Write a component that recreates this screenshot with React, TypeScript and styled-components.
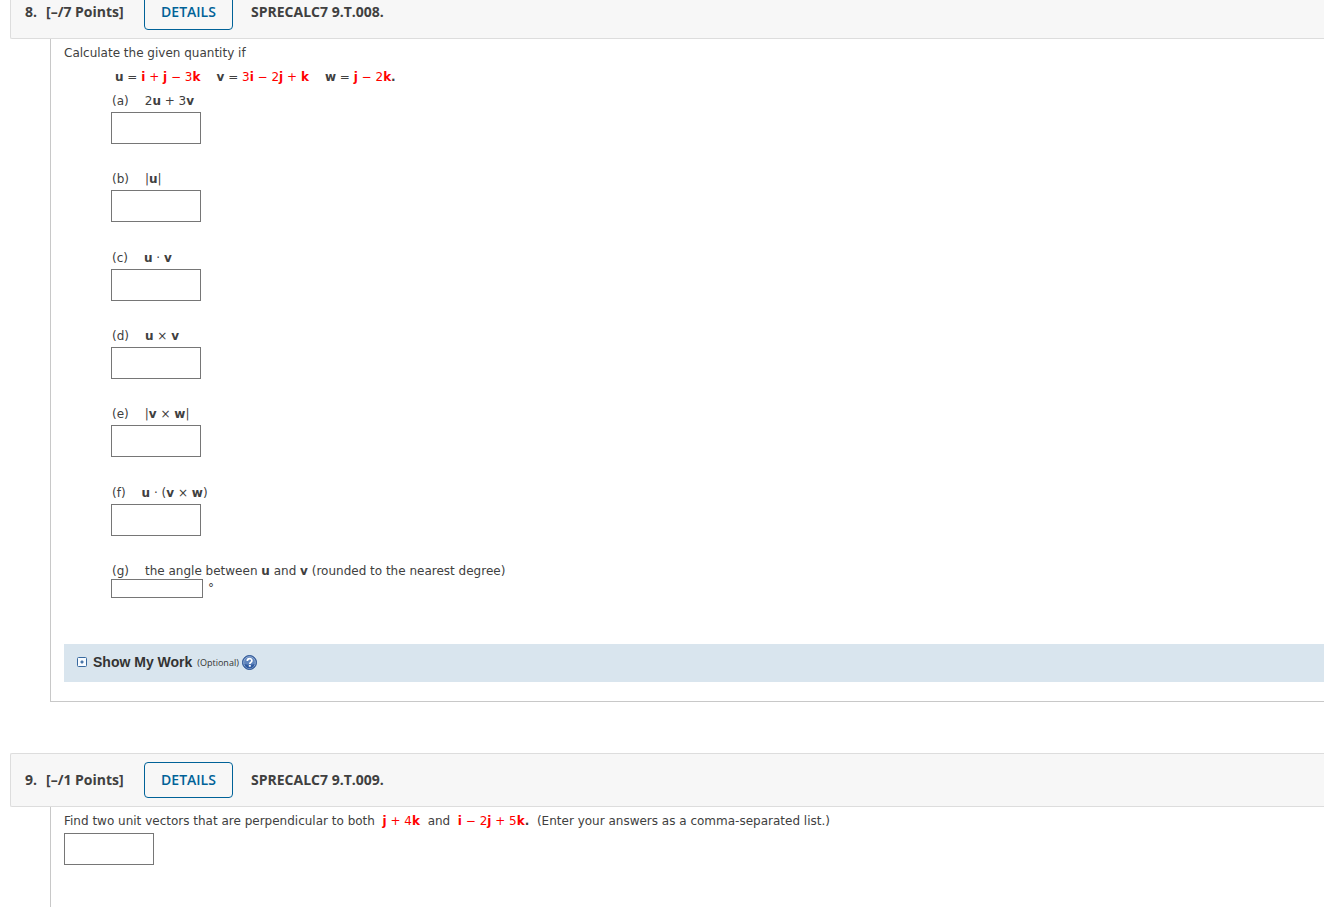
import React, { ReactNode } from "react";
import styled, { createGlobalStyle } from "styled-components";

const GlobalStyle = createGlobalStyle`
  *, *::before, *::after { box-sizing: border-box; }
  body {
    margin: 0;
    background: #fff;
    color: #404040;
    font: 12px/24px "DejaVu Sans", Verdana, sans-serif;
  }
`;

const Page = styled.main`
  margin-top: -15px;
  padding-left: 10px;
  overflow: hidden;
`;

const Question = styled.section`
  margin-bottom: 51px;

  &:last-child {
    margin-bottom: 0;
  }
`;

const QuestionHeader = styled.header`
  display: flex;
  align-items: center;
  height: 54px;
  padding-left: 14px;
  background: #f7f7f7;
  border: 1px solid #ddd;
  border-right: 0;
  border-radius: 2px 0 0 2px;
  font-family: "Open Sans", sans-serif;
  font-size: 14px;
  font-weight: 700;
  white-space: nowrap;
`;

const QuestionNumber = styled.span`
  width: 21px;
`;

const Points = styled.span`
  width: 98px;
`;

const DetailsButton = styled.button`
  width: 89px;
  height: 36px;
  margin-right: 18px;
  padding: 0;
  background: #fff0;
  border: 1px solid #006298;
  border-radius: 4px;
  color: #006298;
  font: 600 14px/20px "Open Sans", sans-serif;
`;

const QuestionCode = styled.h2`
  margin: 0;
  font-size: 14px;
`;

const QuestionBody = styled.div<{ $open?: boolean }>`
  margin-left: 40px;
  padding: 2px 0 19px 13px;
  border-left: 1px solid #c8c8c8;
  border-bottom: ${(p) => (p.$open ? "0" : "1px solid #c8c8c8")};
  min-height: ${(p) => (p.$open ? "100px" : "0")};
`;

const Prompt = styled.p`
  margin: 0;
`;

const Vectors = styled.p`
  display: flex;
  gap: 16px;
  margin: 0 0 0 51px;
`;

const Parts = styled.div`
  display: grid;
  grid-template-rows: repeat(6, 1fr);
  min-height: 470px;
  margin-left: 47px;
`;

const Part = styled.div``;

const PartLabel = styled.label<{ $compact?: boolean }>`
  display: flex;
  gap: 16px;
  height: ${(p) => (p.$compact ? "20px" : "23px")};
  padding-left: 1px;
`;

const AnswerInput = styled.input<{ $plain?: boolean }>`
  display: block;
  width: ${(p) => (p.$plain ? "92px" : "90px")};
  height: ${(p) => (p.$plain ? "19px" : "32px")};
  padding: 1px 4px;
  background: #fff;
  border: 1px solid #767676;
  border-radius: 0;
  font: inherit;
`;

const AnglePart = styled.div`
  margin: 0 0 46px 47px;
`;

const AngleAnswer = styled.div`
  display: flex;
  gap: 5px;
  line-height: 19px;
`;

const Red = styled.span`
  color: #f00;
`;

const WorkBar = styled.div`
  display: flex;
  align-items: center;
  height: 38px;
  padding: 0 0 2px 13px;
  background: #d9e5ee;
`;

const WorkToggle = styled.button`
  display: flex;
  align-items: center;
  gap: 6px;
  padding: 0;
  background: none;
  border: 0;
  color: #333;
  font: 700 14px/20px "Liberation Sans", Arial, sans-serif;
`;

const Optional = styled.small`
  margin: 2px 3px 0 5px;
  color: #333;
  font: 9px/12px "Open Sans", sans-serif;
`;

const HelpButton = styled.button`
  display: flex;
  padding: 0;
  background: none;
  border: 0;
`;

const PlusIcon = () => (
  <svg width="10" height="10" viewBox="0 0 10 10" aria-hidden="true">
    <rect x=".5" y=".5" width="9" height="9" rx="1" fill="#f7fbff" stroke="#38699f" />
    <path d="M4 3h2v1h1v2H6v1H4V6H3V4h1z" fill="#a9c0da" />
    <path d="M4 4h2v2H4z" fill="#4a76a8" />
  </svg>
);

const HelpIcon = () => (
  <svg width="15" height="15" viewBox="0 0 15 15" aria-hidden="true">
    <circle cx="7.5" cy="7.5" r="7" fill="#2d5699" stroke="#2f5797" />
    <circle cx="7.5" cy="7.5" r="5.9" fill="#6085bd" stroke="#a3bbdc" strokeWidth=".8" />
    <path d="M2.4 9a5.2 5.2 0 0 0 10.2 0c-2 1-8 1-10.2 0z" fill="#2f5a9f" />
    <path d="M5.3 6c0-3 4.6-3 4.6-.3 0 1.7-2.1 1.6-2.1 3.2" fill="none" stroke="#fff" strokeWidth="1.7" />
    <path d="M6.8 10h2v1.7h-2z" fill="#fff" />
  </svg>
);

interface HeaderProps {
  number: number;
  points: number;
  code: string;
}

const Header = ({ number, points, code }: HeaderProps) => (
  <QuestionHeader>
    <QuestionNumber>{number}.</QuestionNumber>
    <Points>[–/{points} Points]</Points>
    <DetailsButton type="button">DETAILS</DetailsButton>
    <QuestionCode>{code}</QuestionCode>
  </QuestionHeader>
);

const parts: { id: string; expression: ReactNode }[] = [
  { id: "a", expression: <>2<b>u</b> + 3<b>v</b></> },
  { id: "b", expression: <>|<b>u</b>|</> },
  { id: "c", expression: <><b>u</b> · <b>v</b></> },
  { id: "d", expression: <><b>u</b> × <b>v</b></> },
  { id: "e", expression: <>|<b>v</b> × <b>w</b>|</> },
  { id: "f", expression: <><b>u</b> · (<b>v</b> × <b>w</b>)</> },
];

export default function App() {
  return (
    <>
      <GlobalStyle />
      <Page>
        <Question>
          <Header number={8} points={7} code="SPRECALC7 9.T.008." />
          <QuestionBody>
            <Prompt>Calculate the given quantity if</Prompt>
            <Vectors>
              <span><b>u</b> = <Red><b>i</b> + <b>j</b> − 3<b>k</b></Red></span>
              <span><b>v</b> = <Red>3<b>i</b> − 2<b>j</b> + <b>k</b></Red></span>
              <span><b>w</b> = <Red><b>j</b> − 2<b>k</b></Red><b>.</b></span>
            </Vectors>
            <Parts>
              {parts.map(({ id, expression }) => (
                <Part key={id}>
                  <PartLabel htmlFor={`part-${id}`}>
                    <span>({id})</span>
                    <span>{expression}</span>
                  </PartLabel>
                  <AnswerInput id={`part-${id}`} />
                </Part>
              ))}
            </Parts>
            <AnglePart>
              <PartLabel htmlFor="part-g" $compact>
                <span>(g)</span>
                <span>the angle between <b>u</b> and <b>v</b> (rounded to the nearest degree)</span>
              </PartLabel>
              <AngleAnswer>
                <AnswerInput id="part-g" $plain />
                <span>°</span>
              </AngleAnswer>
            </AnglePart>
            <WorkBar>
              <WorkToggle type="button"><PlusIcon />Show My Work</WorkToggle>
              <Optional>(Optional)</Optional>
              <HelpButton type="button" aria-label="Help"><HelpIcon /></HelpButton>
            </WorkBar>
          </QuestionBody>
        </Question>
        <Question>
          <Header number={9} points={1} code="SPRECALC7 9.T.009." />
          <QuestionBody $open>
            <Prompt>
              <label htmlFor="unit-vectors">
                Find two unit vectors that are perpendicular to both&nbsp; <Red><b>j</b> + 4<b>k</b></Red>&nbsp; and&nbsp; <Red><b>i</b> − 2<b>j</b> + 5<b>k</b></Red><b>.</b>&nbsp; (Enter your answers as a comma-separated list.)
              </label>
            </Prompt>
            <AnswerInput id="unit-vectors" />
          </QuestionBody>
        </Question>
      </Page>
    </>
  );
}
